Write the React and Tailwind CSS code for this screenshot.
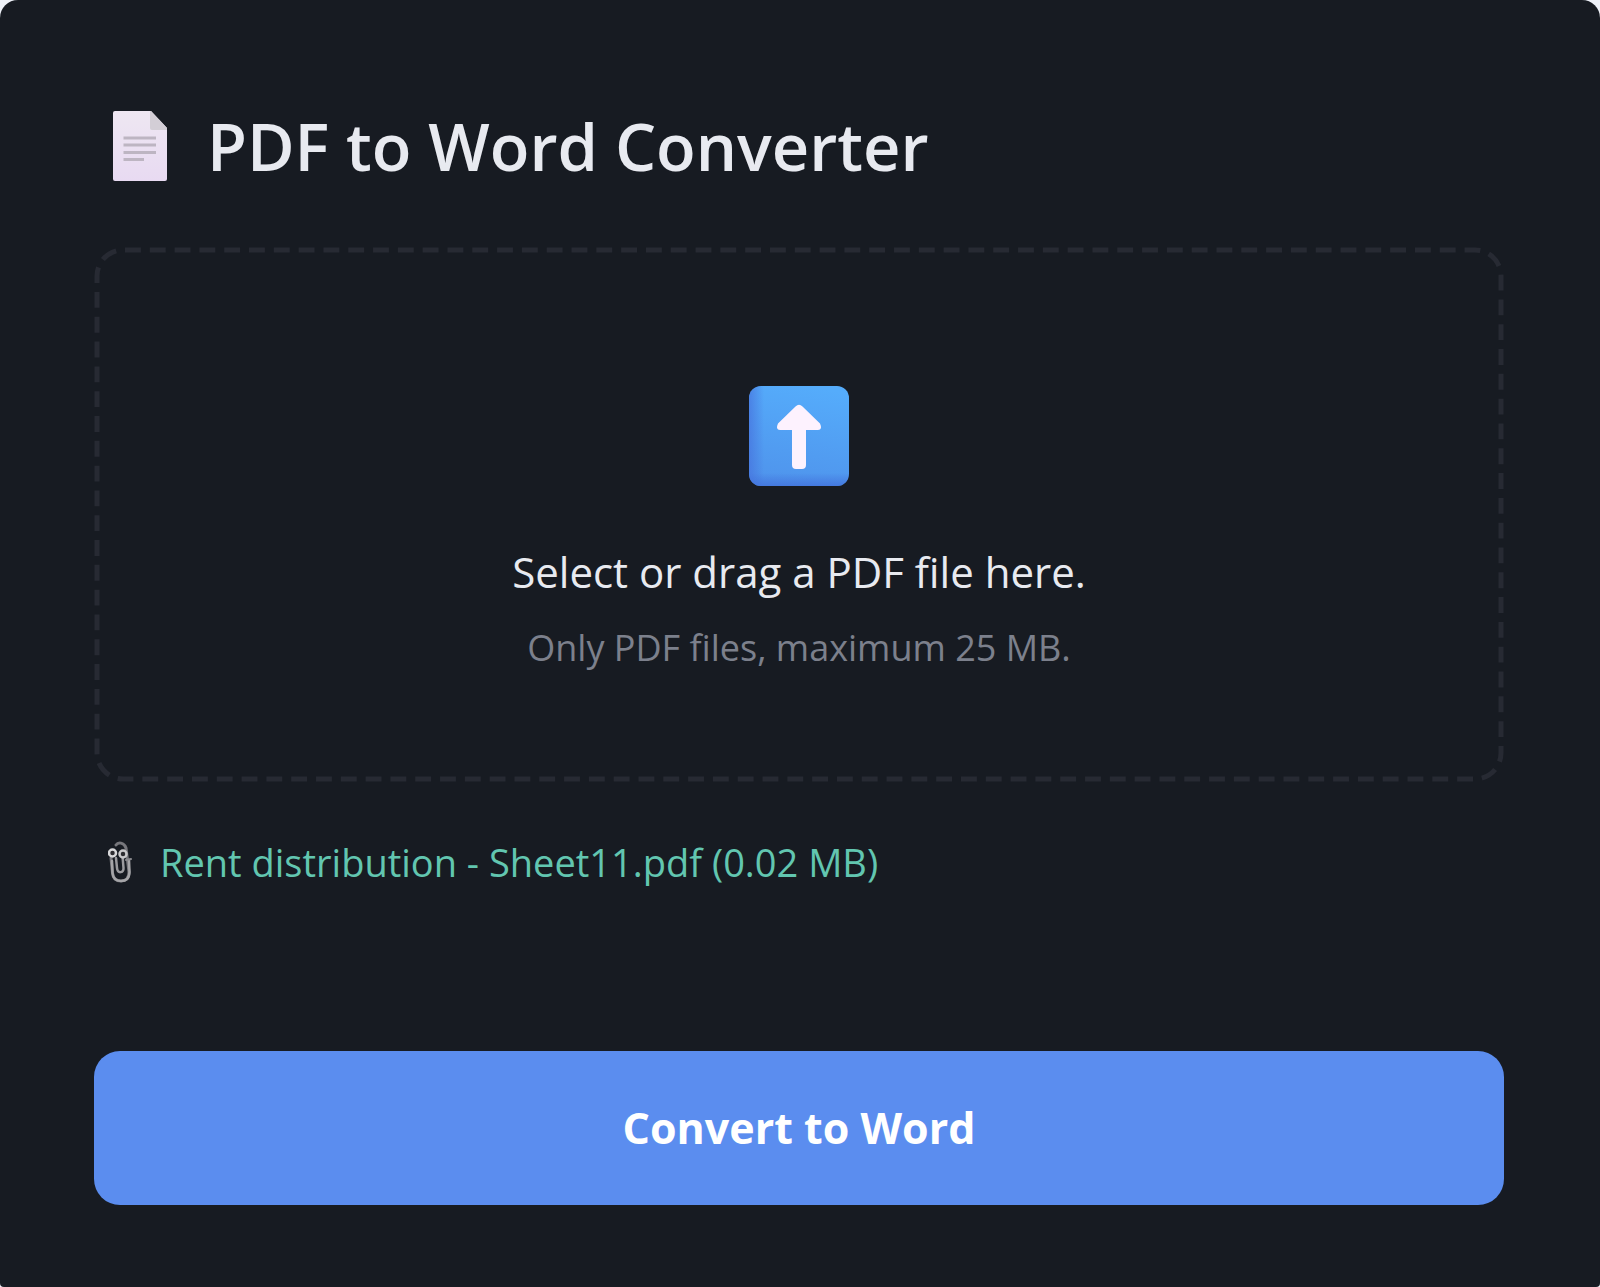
import React, { useState } from 'react';

const DocumentIcon = () => (
    <svg viewBox="0 0 54 70" className="w-[54px] h-[70px] shrink-0" aria-hidden="true">
        <defs>
            <linearGradient id="paper" x1="0" y1="0" x2="0" y2="1">
                <stop offset="0" stopColor="#eee7f2" />
                <stop offset="1" stopColor="#e8daf2" />
            </linearGradient>
        </defs>
        <path d="M2 0H38L54 17V68a2 2 0 0 1-2 2H2a2 2 0 0 1-2-2V2a2 2 0 0 1 2-2Z" fill="url(#paper)" />
        <path d="M37 0H38L54 17V19H39a2 2 0 0 1-2-2Z" fill="#d3ced6" />
        <path d="M10.500 27H43M10.500 34H43M10.500 41.500H43M10.500 48.500H31" stroke="#bdb5c2" strokeWidth="3" />
    </svg>
);

const UploadIcon = () => (
    <svg viewBox="0 0 100 100" className="w-25 h-25" aria-hidden="true">
        <defs>
            <linearGradient id="tile" x1="0.6" y1="0" x2="0.4" y2="1">
                <stop offset="0" stopColor="#55acfb" />
                <stop offset="1" stopColor="#4f94ec" />
            </linearGradient>
            <linearGradient id="tileLeft" x1="0" y1="0" x2="1" y2="0">
                <stop offset="0" stopColor="#4672dd" stopOpacity="0.7" />
                <stop offset="0.15" stopColor="#4672dd" stopOpacity="0" />
            </linearGradient>
            <linearGradient id="tileBottom" x1="0" y1="1" x2="0" y2="0">
                <stop offset="0" stopColor="#4272dc" stopOpacity="0.8" />
                <stop offset="0.13" stopColor="#4272dc" stopOpacity="0" />
            </linearGradient>
        </defs>
        <rect width="100" height="100" rx="12" fill="url(#tile)" />
        <rect width="100" height="100" rx="12" fill="url(#tileLeft)" />
        <rect width="100" height="100" rx="12" fill="url(#tileBottom)" />
        <path
            d="M46.500 20.500Q50 17 53.500 20.500L71 37.500Q74 44 69 44H57V79Q57 83 53 83H47Q43 83 43 79V44H31Q26 44 29 37.500Z"
            fill="#fdf2fe"
        />
    </svg>
);

const PaperclipIcon = () => (
    <svg viewBox="0 0 24 42" className="w-6 h-[42px] shrink-0" fill="none" strokeLinecap="round" aria-hidden="true">
        <path d="M8 4C10 1 16 1 18 7L21 31C21 37 18 40 13 40C8 40 5 37 4.500 32L3 17" stroke="#77777c" strokeWidth="3" />
        <path d="M8 17L9 27C9.500 33 16 32 15.500 27L14.500 15" stroke="#9a9a9e" strokeWidth="2.500" />
        <path d="M21 19L21.500 31C21.500 37 18 40 13 40C8 40 5 37 4.500 32L4 20" stroke="#a5a5a8" strokeWidth="2.500" />
        <path d="M18 19L23 18" stroke="#8a8a8e" strokeWidth="2" />
        <circle cx="4.500" cy="12" r="3.500" fill="#2c2c30" stroke="#d8d8da" strokeWidth="2.500" />
        <circle cx="15" cy="13" r="3.500" fill="#2c2c30" stroke="#c8c8ca" strokeWidth="2.500" />
    </svg>
);

const App = () => {
    const [file, setFile] = useState({ name: 'Rent distribution - Sheet11.pdf', size: 0.02 * 1024 * 1024 });

    const handleFileChange = (e) => {
        const selected = e.target.files[0];
        if (!selected) return;
        setFile(selected);
    };

    const handleDrop = (e) => {
        e.preventDefault();
        const dropped = e.dataTransfer.files[0];
        if (dropped && dropped.type === 'application/pdf') setFile(dropped);
    };

    return (
        <div className="min-h-screen flex bg-[#eef1f8] font-['Segoe_UI','Open_Sans',sans-serif]">
            <main className="flex-1 flex flex-col rounded-t-[18px] rounded-b-[4px] bg-[#171b22] pl-[94px] pr-24 pt-24 pb-[82px]">
                <h1 className="flex items-center gap-10 px-[19px] text-[65px] leading-[100px] font-semibold text-[#e8eaf0]">
                    <DocumentIcon />
                    PDF to Word Converter
                </h1>

                {/* Drop zone */}
                <label
                    onDragOver={(e) => e.preventDefault()}
                    onDrop={handleDrop}
                    className="relative mt-[51px] flex flex-col items-center pt-[139px] pb-[100px] text-center cursor-pointer"
                >
                    <svg className="absolute inset-0 w-full h-full p-[3px] overflow-visible" aria-hidden="true">
                        <rect
                            width="100%"
                            height="100%"
                            rx="26"
                            fill="none"
                            stroke="#272a33"
                            strokeWidth="5"
                            pathLength="3850"
                            strokeDasharray="16 9"
                            strokeDashoffset="-2"
                        />
                    </svg>
                    <input type="file" accept="application/pdf" onChange={handleFileChange} className="sr-only" />
                    <UploadIcon />
                    <span className="mt-[52px] text-[42px] leading-[68px] text-[#e8eaf0]">Select or drag a PDF file here.</span>
                    <span className="mt-2 text-[36px] leading-[68px] text-[#7c808c]">Only PDF files, maximum 25 MB.</span>
                </label>

                {/* Selected file */}
                <div className="mt-[46px] flex items-center gap-7 px-3.5 text-[38px] leading-[68px] text-[#62c6b0]">
                    <PaperclipIcon />
                    <p>
                        {file.name} ({(file.size / 1024 / 1024).toFixed(2)} MB)
                    </p>
                </div>

                <button
                    type="button"
                    className="mt-auto h-[154px] rounded-[26px] bg-[#5b8def] text-[43px] font-bold text-white cursor-pointer hover:bg-[#4f82e6]"
                >
                    Convert to Word
                </button>
            </main>
        </div>
    );
};

export default App;
